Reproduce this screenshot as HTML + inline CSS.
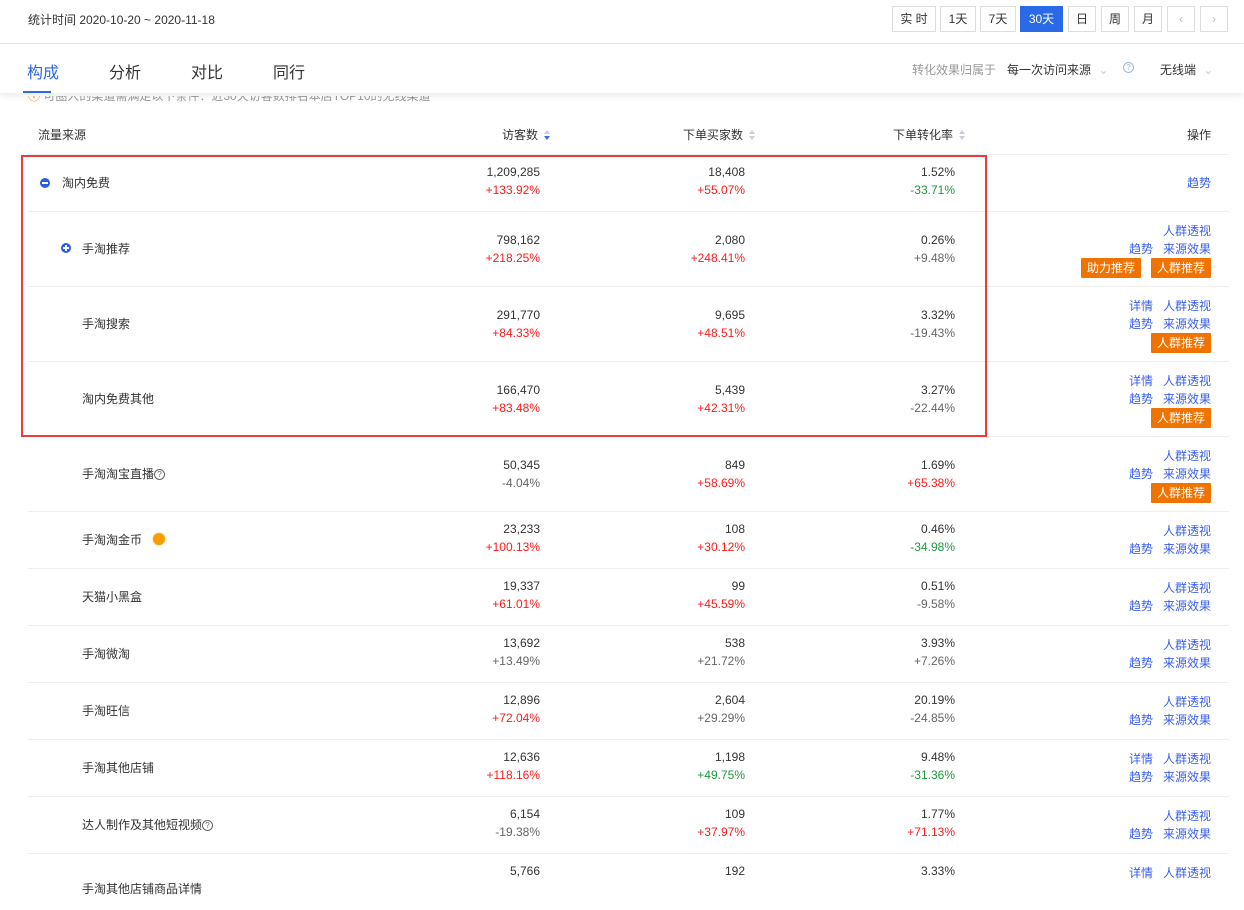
<!DOCTYPE html>
<html><head><meta charset="utf-8"><style>
*{margin:0;padding:0;box-sizing:border-box}
body{width:1244px;height:885px;overflow:hidden;background:#fff;font-family:"Liberation Sans","Noto Sans CJK SC",sans-serif;font-size:12px;color:#333;position:relative}
.abs{position:absolute}
.btn{position:absolute;top:6px;height:26px;border:1px solid #ddd;line-height:24px;text-align:center;font-size:12px;color:#333;background:#fff}
.tab{position:absolute;top:59px;font-size:16px;color:#333}
.row{position:absolute;left:28px;width:1201px;border-top:1px solid #eee}
.nm{position:absolute;top:50%;margin-top:-9px;line-height:18px;font-size:12px;color:#333}
.n{position:absolute;line-height:18px;text-align:right;white-space:nowrap}
.c1{right:689px}.c2{right:484px}.c3{right:274px}
.r57 .t1{top:8px}.r57 .t2{top:26px}
.r75 .t1{top:19px}.r75 .t2{top:37px}
.r57 .a1{top:10px}.r57 .a2{top:28px}
.r75 .a1{top:10px}.r75 .a2{top:28px}.r75 .a3{top:46px}
.ac{position:absolute;right:18px;line-height:18px;color:#3a5ff0;white-space:nowrap;text-align:right}
.ac span{margin-left:10px}
.ob{display:inline-block;background:#f07300;color:#fff;height:20px;line-height:20px;padding:0 6px;margin-left:6px;border-radius:1px}
.red{color:#ff1a1a}.grn{color:#1d9a3c}.gry{color:#666}
.q{display:inline-block;width:11px;height:11px;border:1px solid #666;border-radius:50%;font-size:8px;line-height:9px;text-align:center;vertical-align:1px;color:#666}
.sort{display:inline-block;vertical-align:middle;margin-left:6px;width:7px;height:11px;position:relative}
.sort:before{content:"";position:absolute;left:0;top:0;border:3.5px solid transparent;border-bottom:4px solid #c8cfd8;border-top:0}
.sort:after{content:"";position:absolute;left:0;top:6px;border:3.5px solid transparent;border-top:4px solid #c8cfd8;border-bottom:0}
.sort.on:after{border-top-color:#3a6ae8}
</style></head><body>
<div class="abs" style="left:28px;top:11px;line-height:18px;color:#333">统计时间 2020-10-20 ~ 2020-11-18</div>
<div class="btn" style="left:892px;width:44px">实 时</div>
<div class="btn" style="left:940px;width:36px">1天</div>
<div class="btn" style="left:980px;width:36px">7天</div>
<div class="btn" style="left:1020px;width:43px;background:#2a6ae8;border-color:#2a6ae8;color:#fff">30天</div>
<div class="btn" style="left:1068px;width:28px">日</div>
<div class="btn" style="left:1101px;width:28px">周</div>
<div class="btn" style="left:1134px;width:28px">月</div>
<div class="btn" style="left:1167px;width:28px;color:#bbb">&lsaquo;</div>
<div class="btn" style="left:1200px;width:28px;color:#bbb">&rsaquo;</div>
<div class="abs" style="left:0;top:43px;width:1244px;height:1px;background:#e8e8e8"></div>
<div class="abs" style="left:28px;top:96px;width:420px;height:14px;overflow:hidden;color:#999;font-size:12px;line-height:0px"><span style="color:#f07300">ⓘ</span> 可圈人的渠道需满足以下条件：近30天访客数排名本店TOP10的无线渠道</div>
<div class="abs" style="left:0;top:44px;width:1244px;height:49px;background:#fff;box-shadow:0 3px 6px rgba(0,0,0,.08)"></div>
<div class="tab" style="left:27px;color:#2a6ae8">构成</div>
<div class="abs" style="left:23px;top:91px;width:28px;height:2px;background:#2a6ae8"></div>
<div class="tab" style="left:109px">分析</div>
<div class="tab" style="left:191px">对比</div>
<div class="tab" style="left:273px">同行</div>
<div class="abs" style="left:912px;top:61px;color:#999;font-size:12px">转化效果归属于</div>
<div class="abs" style="left:1007px;top:61px;color:#333">每一次访问来源 <span style="color:#ccc;margin-left:4px">&#8964;</span></div>
<div class="abs" style="left:1123px;top:62px;width:11px;height:11px;border:1px solid #9bb8e8;border-radius:50%;font-size:8px;line-height:9px;text-align:center;color:#9bb8e8">?</div>
<div class="abs" style="left:1160px;top:61px;color:#333">无线端 <span style="color:#ccc;margin-left:4px">&#8964;</span></div>

<div class="abs" style="left:38px;top:126px;line-height:18px">流量来源</div>
<div class="abs" style="left:502px;top:126px;line-height:18px">访客数<span class="sort on"></span></div>
<div class="abs" style="left:683px;top:126px;line-height:18px">下单买家数<span class="sort"></span></div>
<div class="abs" style="left:893px;top:126px;line-height:18px">下单转化率<span class="sort"></span></div>
<div class="abs" style="left:1187px;top:126px;line-height:18px">操作</div>

<div class="row r57" style="top:154px;height:57px"><div class="abs" style="left:12px;top:23px;width:10px;height:10px;border-radius:50%;background:#2a5ee0"><div style="position:absolute;left:2px;top:4px;width:6px;height:2px;background:#fff"></div></div><div class="nm" style="left:34px">淘内免费</div>
<div class="n c1 t1">1,209,285</div><div class="n c1 t2 red">+133.92%</div><div class="n c2 t1">18,408</div><div class="n c2 t2 red">+55.07%</div><div class="n c3 t1">1.52%</div><div class="n c3 t2 grn">-33.71%</div>
<div class="ac a1" style="top:19px">趋势</div></div>

<div class="row r75" style="top:211px;height:75px"><div class="abs" style="left:33px;top:31px;width:10px;height:10px;border-radius:50%;background:#2a5ee0"><div style="position:absolute;left:2px;top:4px;width:6px;height:2px;background:#fff"></div><div style="position:absolute;left:4px;top:2px;width:2px;height:6px;background:#fff"></div></div><div class="nm" style="left:54px">手淘推荐</div>
<div class="n c1 t1">798,162</div><div class="n c1 t2 red">+218.25%</div><div class="n c2 t1">2,080</div><div class="n c2 t2 red">+248.41%</div><div class="n c3 t1">0.26%</div><div class="n c3 t2 gry">+9.48%</div>
<div class="ac a1">人群透视</div><div class="ac a2">趋势<span>来源效果</span></div><div class="ac a3"><span class="ob">助力推荐</span><span class="ob">人群推荐</span></div></div>

<div class="row r75" style="top:286px;height:75px"><div class="nm" style="left:54px">手淘搜索</div>
<div class="n c1 t1">291,770</div><div class="n c1 t2 red">+84.33%</div><div class="n c2 t1">9,695</div><div class="n c2 t2 red">+48.51%</div><div class="n c3 t1">3.32%</div><div class="n c3 t2 gry">-19.43%</div>
<div class="ac a1">详情<span>人群透视</span></div><div class="ac a2">趋势<span>来源效果</span></div><div class="ac a3"><span class="ob">人群推荐</span></div></div>

<div class="row r75" style="top:361px;height:75px"><div class="nm" style="left:54px">淘内免费其他</div>
<div class="n c1 t1">166,470</div><div class="n c1 t2 red">+83.48%</div><div class="n c2 t1">5,439</div><div class="n c2 t2 red">+42.31%</div><div class="n c3 t1">3.27%</div><div class="n c3 t2 gry">-22.44%</div>
<div class="ac a1">详情<span>人群透视</span></div><div class="ac a2">趋势<span>来源效果</span></div><div class="ac a3"><span class="ob">人群推荐</span></div></div>

<div class="row r75" style="top:436px;height:75px"><div class="nm" style="left:54px">手淘淘宝直播<span class="q">?</span></div>
<div class="n c1 t1">50,345</div><div class="n c1 t2 gry">-4.04%</div><div class="n c2 t1">849</div><div class="n c2 t2 red">+58.69%</div><div class="n c3 t1">1.69%</div><div class="n c3 t2 red">+65.38%</div>
<div class="ac a1">人群透视</div><div class="ac a2">趋势<span>来源效果</span></div><div class="ac a3"><span class="ob">人群推荐</span></div></div>

<div class="row r57" style="top:511px;height:57px"><div class="nm" style="left:54px">手淘淘金币 <span style="display:inline-block;width:12px;height:12px;border-radius:50%;background:#f5a000;box-shadow:0 0 2px #f5c060;margin-left:8px;vertical-align:-1px"></span></div>
<div class="n c1 t1">23,233</div><div class="n c1 t2 red">+100.13%</div><div class="n c2 t1">108</div><div class="n c2 t2 red">+30.12%</div><div class="n c3 t1">0.46%</div><div class="n c3 t2 grn">-34.98%</div>
<div class="ac a1">人群透视</div><div class="ac a2">趋势<span>来源效果</span></div></div>

<div class="row r57" style="top:568px;height:57px"><div class="nm" style="left:54px">天猫小黑盒</div>
<div class="n c1 t1">19,337</div><div class="n c1 t2 red">+61.01%</div><div class="n c2 t1">99</div><div class="n c2 t2 red">+45.59%</div><div class="n c3 t1">0.51%</div><div class="n c3 t2 gry">-9.58%</div>
<div class="ac a1">人群透视</div><div class="ac a2">趋势<span>来源效果</span></div></div>

<div class="row r57" style="top:625px;height:57px"><div class="nm" style="left:54px">手淘微淘</div>
<div class="n c1 t1">13,692</div><div class="n c1 t2 gry">+13.49%</div><div class="n c2 t1">538</div><div class="n c2 t2 gry">+21.72%</div><div class="n c3 t1">3.93%</div><div class="n c3 t2 gry">+7.26%</div>
<div class="ac a1">人群透视</div><div class="ac a2">趋势<span>来源效果</span></div></div>

<div class="row r57" style="top:682px;height:57px"><div class="nm" style="left:54px">手淘旺信</div>
<div class="n c1 t1">12,896</div><div class="n c1 t2 red">+72.04%</div><div class="n c2 t1">2,604</div><div class="n c2 t2 gry">+29.29%</div><div class="n c3 t1">20.19%</div><div class="n c3 t2 gry">-24.85%</div>
<div class="ac a1">人群透视</div><div class="ac a2">趋势<span>来源效果</span></div></div>

<div class="row r57" style="top:739px;height:57px"><div class="nm" style="left:54px">手淘其他店铺</div>
<div class="n c1 t1">12,636</div><div class="n c1 t2 red">+118.16%</div><div class="n c2 t1">1,198</div><div class="n c2 t2 grn">+49.75%</div><div class="n c3 t1">9.48%</div><div class="n c3 t2 grn">-31.36%</div>
<div class="ac a1">详情<span>人群透视</span></div><div class="ac a2">趋势<span>来源效果</span></div></div>

<div class="row r57" style="top:796px;height:57px"><div class="nm" style="left:54px">达人制作及其他短视频<span class="q">?</span></div>
<div class="n c1 t1">6,154</div><div class="n c1 t2 gry">-19.38%</div><div class="n c2 t1">109</div><div class="n c2 t2 red">+37.97%</div><div class="n c3 t1">1.77%</div><div class="n c3 t2 red">+71.13%</div>
<div class="ac a1">人群透视</div><div class="ac a2">趋势<span>来源效果</span></div></div>

<div class="row r57" style="top:853px;height:57px"><div class="nm" style="left:54px;top:26px;margin-top:0">手淘其他店铺商品详情</div>
<div class="n c1 t1">5,766</div><div class="n c2 t1">192</div><div class="n c3 t1">3.33%</div>
<div class="ac a1">详情<span>人群透视</span></div></div>

<div class="abs" style="left:21px;top:155px;width:966px;height:282px;border:2px solid #f03a3a"></div>
</body></html>
